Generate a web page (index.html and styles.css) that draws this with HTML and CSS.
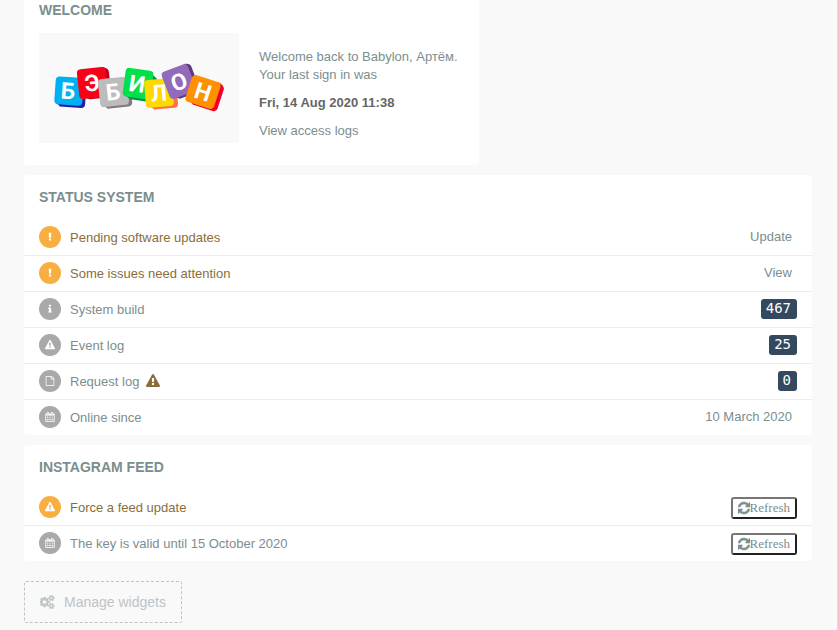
FILE: index.html
```html
<!DOCTYPE html>
<html lang="en">
<head>
<meta charset="utf-8">
<title>Dashboard</title>
<link rel="stylesheet" href="styles.css">
</head>
<body>
<svg class="sprite" aria-hidden="true">
  <symbol id="warning" viewBox="0 0 1792 1792"><path d="M1024 1375v-190q0-14-9.5-23.5t-22.5-9.5h-192q-13 0-22.5 9.5t-9.5 23.5v190q0 14 9.5 23.5t22.5 9.5h192q13 0 22.5-9.5t9.5-23.5zm-2-374l18-459q0-12-10-19-13-11-24-11h-220q-11 0-24 11-10 7-10 21l17 457q0 10 10 16.5t24 6.5h185q14 0 23.5-6.5t10.5-16.5zm-14-934l768 1408q35 63-2 126-17 29-46.5 46t-63.5 17h-1536q-34 0-63.5-17t-46.5-46q-37-63-2-126l768-1408q17-31 47-49t65-18 65 18 47 49z"/></symbol>
  <symbol id="exclamation" viewBox="0 0 1792 1792"><path d="M1088 1248v224q0 26-19 45t-45 19h-256q-26 0-45-19t-19-45v-224q0-26 19-45t45-19h256q26 0 45 19t19 45zm30-1056l-28 768q-1 26-20.5 45t-45.5 19h-256q-26 0-45.5-19t-20.5-45l-28-768q-1-26 17.5-45t44.5-19h320q26 0 44.5 19t17.5 45z"/></symbol>
  <symbol id="info" viewBox="0 0 1792 1792"><path d="M1216 1344v128q0 26-19 45t-45 19h-512q-26 0-45-19t-19-45v-128q0-26 19-45t45-19h64v-384h-64q-26 0-45-19t-19-45v-128q0-26 19-45t45-19h384q26 0 45 19t19 45v576h64q26 0 45 19t19 45zm-128-1152v192q0 26-19 45t-45 19h-256q-26 0-45-19t-19-45v-192q0-26 19-45t45-19h256q26 0 45 19t19 45z"/></symbol>
  <symbol id="file" viewBox="0 0 1792 1792"><path d="M1596 380q28 28 48 76t20 88v1152q0 40-28 68t-68 28h-1344q-40 0-68-28t-28-68v-1600q0-40 28-68t68-28h896q40 0 88 20t76 48zm-444-244v376h376q-10-29-22-41l-313-313q-12-12-41-22zm384 1528v-1024h-416q-40 0-68-28t-28-68v-416h-768v1536h1280z"/></symbol>
  <symbol id="calendar" viewBox="0 0 1792 1792"><path d="M192 1664h288v-288h-288v288zm352 0h320v-288h-320v288zm-352-352h288v-320h-288v320zm352 0h320v-320h-320v320zm-352-384h288v-288h-288v288zm736 736h320v-288h-320v288zm-384-736h320v-288h-320v288zm768 736h288v-288h-288v288zm-384-352h320v-320h-320v320zm-352-864v-288q0-13-9.5-22.5t-22.5-9.5h-64q-13 0-22.5 9.5t-9.5 22.5v288q0 13 9.5 22.5t22.5 9.5h64q13 0 22.5-9.5t9.5-22.5zm736 864h288v-320h-288v320zm-384-384h320v-288h-320v288zm384 0h288v-288h-288v288zm32-480v-288q0-13-9.5-22.5t-22.5-9.5h-64q-13 0-22.5 9.5t-9.5 22.5v288q0 13 9.5 22.5t22.5 9.5h64q13 0 22.5-9.5t9.5-22.5zm384-64v1280q0 52-38 90t-90 38h-1408q-52 0-90-38t-38-90v-1280q0-52 38-90t90-38h128v-96q0-66 47-113t113-47h64q66 0 113 47t47 113v96h384v-96q0-66 47-113t113-47h64q66 0 113 47t47 113v96h128q52 0 90 38t38 90z"/></symbol>
  <symbol id="refresh" viewBox="128 0 1536 1792"><path d="M1639 1056q0 5-1 7-64 268-268 434.500t-478 166.500q-146 0-282.500-55t-243.500-157l-129 129q-19 19-45 19t-45-19-19-45v-448q0-26 19-45t45-19h448q26 0 45 19t19 45-19 45l-137 137q71 66 161 102t187 36q134 0 250-65t186-179q11-17 53-117 8-23 30-23h192q13 0 22.500 9.500t9.500 22.500zm25-800v448q0 26-19 45t-45 19h-448q-26 0-45-19t-19-45 19-45l138-138q-148-137-349-137-134 0-250 65t-186 179q-11 17-53 117-8 23-30 23h-199q-13 0-22.500-9.500t-9.500-22.500v-7q65-268 270-434.500t480-166.500q146 0 284 55.500t245 156.500l130-129q19-19 45-19t45 19 19 45z"/></symbol>
  <symbol id="cogs" viewBox="0 0 1920 1792"><path d="M832 896q0-106-75-181t-181-75-181 75-75 181 75 181 181 75 181-75 75-181zm768 512q0-52-38-90t-90-38-90 38-38 90q0 53 37.500 90.500t90.500 37.500 90.500-37.500 37.500-90.500zm0-1024q0-52-38-90t-90-38-90 38-38 90q0 53 37.500 90.500t90.500 37.500 90.500-37.500 37.500-90.500zm-384 421v185q0 10-7 19.500t-16 10.500l-155 24q-11 35-32 76 34 48 90 115 7 10 7 20 0 12-7 19-23 30-82.500 89.500t-78.500 59.500q-11 0-21-7l-115-90q-37 19-77 31-11 108-23 155-7 24-30 24h-186q-11 0-20-7.500t-10-17.500l-23-153q-34-10-75-31l-118 89q-7 7-20 7-11 0-21-8-144-133-144-160 0-9 7-19 10-14 41-53t47-61q-23-44-35-82l-152-24q-10-1-17-9.500t-7-19.500v-185q0-10 7-19.500t16-10.500l155-24q11-35 32-76-34-48-90-115-7-11-7-20 0-12 7-20 22-30 82-89t79-59q11 0 21 7l115 90q34-18 77-32 11-108 23-154 7-24 30-24h186q11 0 20 7.500t10 17.500l23 153q34 10 75 31l118-89q8-7 20-7 11 0 21 8 144 133 144 160 0 9-7 19-12 16-42 54t-45 60q23 48 34 82l152 23q10 2 17 10.500t7 19.500zm640 533v140q0 16-149 31-12 27-30 52 51 113 51 138 0 4-4 7-122 71-124 71-8 0-46-47t-52-68q-20 2-30 2t-30-2q-14 21-52 68t-46 47q-2 0-124-71-4-3-4-7 0-25 51-138-18-25-30-52-149-15-149-31v-140q0-16 149-31 13-29 30-52-51-113-51-138 0-4 4-7 4-2 35-20t59-34 30-16q8 0 46 46.500t52 67.500q20-2 30-2t30 2q51-71 92-112l6-2q4 0 124 70 4 3 4 7 0 25-51 138 17 23 30 52 149 15 149 31zm0-1024v140q0 16-149 31-12 27-30 52 51 113 51 138 0 4-4 7-122 71-124 71-8 0-46-47t-52-68q-20 2-30 2t-30-2q-14 21-52 68t-46 47q-2 0-124-71-4-3-4-7 0-25 51-138-18-25-30-52-149-15-149-31v-140q0-16 149-31 13-29 30-52-51-113-51-138 0-4 4-7 4-2 35-20t59-34 30-16q8 0 46 46.500t52 67.500q20-2 30-2t30 2q51-71 92-112l6-2q4 0 124 70 4 3 4 7 0 25-51 138 17 23 30 52 149 15 149 31z"/></symbol>
</svg>

<main class="dashboard">
  <section class="card welcome">
    <h2>Welcome</h2>
    <div class="welcome-body">
      <div class="brand">
        <svg class="logo" viewBox="0 0 200 110" role="img" aria-label="Бэбилон">
          <g transform="translate(29 58) rotate(4)">
            <path d="M-12 11L-7 16H14Q18 16 18 12V-8L11-13Z" fill="#2a1aa8"/>
            <rect x="-13" y="-14" width="28" height="28" rx="4" fill="#00b1f1"/>
            <text y="8">Б</text>
          </g>
          <g transform="translate(53 50) rotate(-6)">
            <path d="M-10 13L-4 16H14Q18 16 18 12V-9Q18-14 11-15Z" fill="#b80020"/>
            <rect x="-14" y="-15" width="29" height="30" rx="4" fill="#fa0016"/>
            <text y="8">Э</text>
          </g>
          <g transform="translate(74 59) rotate(-6)">
            <path d="M-10 13L-7 16H14Q18 16 18 12V-9L11-14Z" fill="#817b7b"/>
            <rect x="-14" y="-14" width="29" height="28" rx="4" fill="#bcbcbc"/>
            <text y="8">Б</text>
          </g>
          <g transform="translate(98 51) rotate(8)">
            <path d="M-10 13L-4 16H15Q19 16 19 12V-8L10-14Z" fill="#068a45"/>
            <rect x="-13" y="-15" width="28" height="29" rx="4" fill="#00e04b"/>
            <text y="8">И</text>
          </g>
          <g transform="translate(120 60) rotate(-5)">
            <path d="M-12 11L-6 16H14Q18 16 18 12V-8L11-13Z" fill="#ff7048"/>
            <rect x="-14" y="-14" width="28" height="28" rx="4" fill="#ffd800"/>
            <text y="8">Л</text>
          </g>
          <g transform="translate(140 49) rotate(-21)">
            <path d="M-10 12L-5 16H13Q17 16 17 12V-10Q17-14 11-15Z" fill="#5d397a"/>
            <rect x="-14" y="-15" width="28" height="29" rx="4" fill="#916abc"/>
            <text y="8">О</text>
          </g>
          <g transform="translate(164 59) rotate(18)">
            <path d="M-10 12L-6 15H15Q19 15 19 11V-9Q18-13 11-14Z" fill="#f0002d"/>
            <rect x="-15" y="-14" width="30" height="28" rx="4" fill="#ff9000"/>
            <text y="8">Н</text>
          </g>
        </svg>
      </div>
      <div class="greeting">
        <p>Welcome back to Babylon, Артём.<br>Your last sign in was</p>
        <p><strong>Fri, 14 Aug 2020 11:38</strong></p>
        <p><a href="#logs">View access logs</a></p>
      </div>
    </div>
  </section>

  <section class="card">
    <h2>Status system</h2>
    <ul class="rows">
      <li class="alert"><span class="dot"><svg><use href="#exclamation"/></svg></span><span class="label">Pending software updates</span><a class="value" href="#update">Update</a></li>
      <li class="alert"><span class="dot"><svg><use href="#exclamation"/></svg></span><span class="label">Some issues need attention</span><a class="value" href="#issues">View</a></li>
      <li><span class="dot"><svg><use href="#info"/></svg></span><span class="label">System build</span><a class="badge" href="#build">467</a></li>
      <li><span class="dot"><svg><use href="#warning"/></svg></span><span class="label">Event log</span><a class="badge" href="#events">25</a></li>
      <li><span class="dot"><svg><use href="#file"/></svg></span><span class="label">Request log <svg class="flag"><use href="#warning"/></svg></span><a class="badge" href="#requests">0</a></li>
      <li><span class="dot"><svg><use href="#calendar"/></svg></span><span class="label">Online since</span><span class="value">10 March 2020</span></li>
    </ul>
  </section>

  <section class="card">
    <h2>Instagram feed</h2>
    <ul class="rows">
      <li class="alert"><span class="dot"><svg><use href="#warning"/></svg></span><span class="label">Force a feed update</span><button class="refresh" type="button"><svg><use href="#refresh"/></svg>Refresh</button></li>
      <li><span class="dot"><svg><use href="#calendar"/></svg></span><span class="label">The key is valid until 15 October 2020</span><button class="refresh" type="button"><svg><use href="#refresh"/></svg>Refresh</button></li>
    </ul>
  </section>

  <button class="manage" type="button"><svg><use href="#cogs"/></svg>Manage widgets</button>
</main>
</body>
</html>
```
FILE: styles.css
```css
* {
  box-sizing: border-box;
}

body {
  margin: 0;
  min-height: 100vh;
  overflow: hidden;
  background: #f9f9f9;
  border-right: 1px solid #dcdcdc;
  color: #7b8e8e;
  font: 13px/18px "Liberation Sans", Arial, sans-serif;
}

svg {
  fill: currentColor;
}

a {
  color: inherit;
  text-decoration: none;
}

.sprite {
  display: none;
}

/* The page is scrolled slightly past the top of the first card. */
.dashboard {
  display: flex;
  flex-direction: column;
  gap: 10px;
  margin-top: -12px;
  padding: 0 25px 0 24px;
}

.card {
  background: #fff;
  border-radius: 4px;
}

.card h2 {
  margin: 0;
  padding: 13px 15px 14px;
  font-size: 14px;
  line-height: 18px;
  text-transform: uppercase;
}

.welcome {
  align-self: flex-start;
  min-width: 455px;
  padding-bottom: 22px;
}

.welcome-body {
  display: flex;
  gap: 20px;
  padding: 0 15px;
}

.brand {
  width: 200px;
  background: #f9f9f9;
}

.logo {
  display: block;
  width: 100%;
}

.logo text {
  fill: #fff;
  font: bold 23px Roboto, sans-serif;
  text-anchor: middle;
}

.greeting {
  padding-top: 15px;
}

.greeting p {
  margin: 0 0 10px;
}

.greeting p:last-child {
  margin-bottom: 0;
}

.greeting strong {
  color: #666;
}

.rows {
  margin: 0;
  padding: 0;
  list-style: none;
}

.rows li {
  display: flex;
  align-items: center;
  height: 36px;
  padding: 0 15px 1px;
  border-bottom: 1px solid #ececec;
}

.rows li:last-child {
  height: 35px;
  border-bottom: 0;
}

.dot {
  display: flex;
  align-items: center;
  justify-content: center;
  width: 22px;
  height: 22px;
  margin-right: 9px;
  border-radius: 50%;
  background: #a9a9a9;
  color: #fff;
}

.dot svg {
  width: 10px;
  height: 10px;
}

.label {
  flex: 1;
  padding-top: 2px;
}

.alert .label,
.flag {
  color: #8a6d3b;
}

.alert .dot {
  background: #f9ae42;
}

.flag {
  width: 14px;
  height: 14px;
  margin-left: 3px;
  vertical-align: -2px;
}

.value {
  margin-right: 5px;
}

.badge {
  height: 20px;
  padding: 0 6px 0 5px;
  border-radius: 3px;
  background: #34495e;
  color: #fff;
  font: 14px/18px "DejaVu Sans Mono", monospace;
}

.refresh {
  display: flex;
  align-items: center;
  height: 22px;
  margin-top: 2px;
  padding: 0 5px;
  border: 2px solid;
  border-color: #767676 #212121 #212121 #767676;
  border-radius: 3px;
  background: #fff;
  color: #7b8e8e;
  font: 13px/18px "Liberation Serif", "Times New Roman", serif;
}

.refresh svg {
  width: 12px;
  height: 14px;
  stroke: currentColor;
  stroke-width: 70;
}

.manage {
  display: flex;
  align-items: center;
  align-self: flex-start;
  gap: 9px;
  height: 42px;
  margin-top: 10px;
  padding: 0 15px;
  border: 1px dashed #bdc3c7;
  border-radius: 2px;
  background: transparent;
  color: #bdc3c7;
  font: 14px/20px "Liberation Sans", Arial, sans-serif;
}

.manage svg {
  width: 15px;
  height: 14px;
  stroke: currentColor;
  stroke-width: 50;
}
```
